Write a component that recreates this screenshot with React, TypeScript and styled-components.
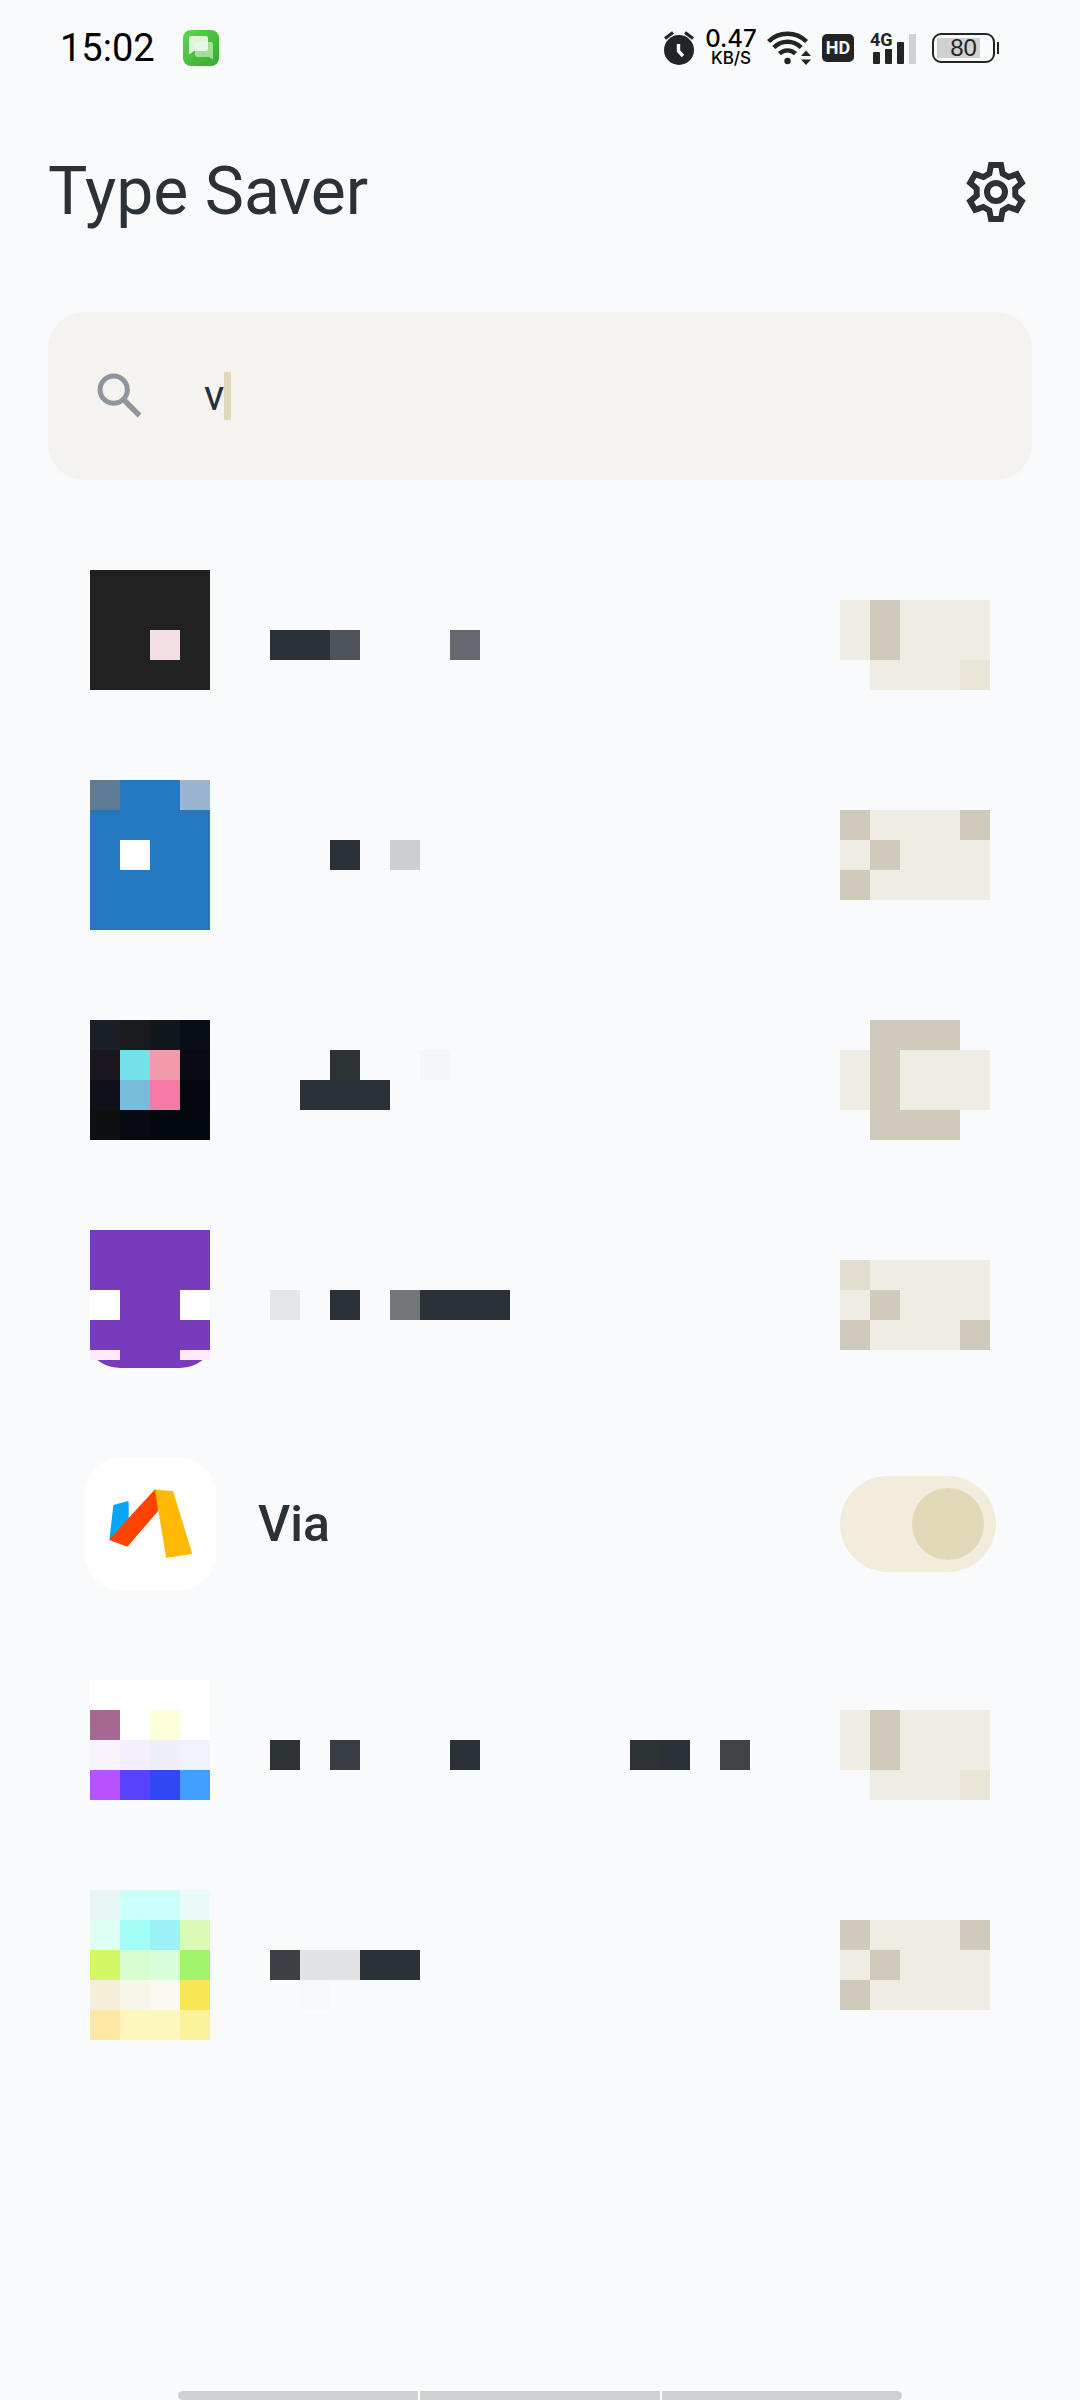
import React, { useState } from "react";
import styled, { createGlobalStyle } from "styled-components";

const GlobalStyle = createGlobalStyle`
  * { box-sizing: border-box; }
  body {
    margin: 0;
    background: #f8fafb;
    color: #2b3237;
    font-family: Roboto, "Noto Sans", sans-serif;
  }
`;

const Page = styled.div`
  min-height: 100vh;
  display: flex;
  flex-direction: column;
  background: #f8fafb;
`;

/* Status bar */

const StatusBar = styled.div`
  height: 96px;
  padding: 0 81px 0 60px;
  display: flex;
  align-items: center;
  justify-content: space-between;
  color: #000;
`;

const StatusGroup = styled.div<{ $gap: number }>`
  display: flex;
  align-items: center;
  gap: ${(p) => p.$gap}px;
`;

const Clock = styled.time`
  font-size: 38px;
  line-height: 44px;
  font-weight: 400;
`;

const NetSpeed = styled.div`
  width: 50px;
  display: flex;
  flex-direction: column;
  align-items: center;
  font-family: Inter, Roboto, sans-serif;
  font-weight: 500;
`;

const SpeedValue = styled.span`
  font-size: 24px;
  line-height: 20px;
`;

const SpeedUnit = styled.span`
  font-size: 17px;
  line-height: 18px;
`;

const HdBadge = styled.span`
  width: 32px;
  height: 28px;
  border-radius: 5px;
  display: flex;
  align-items: center;
  justify-content: center;
  background: #232425;
  color: #f8fafb;
  font: 700 18px/28px Roboto, sans-serif;
`;

const Signal = styled.div`
  position: relative;
  width: 46px;
  height: 34px;
  padding-bottom: 1px;
  display: flex;
  align-items: flex-end;
  justify-content: flex-end;
  gap: 5px;
`;

const SignalLabel = styled.span`
  position: absolute;
  left: 0;
  top: 0;
  color: #232425;
  font: 700 18px/18px Roboto, sans-serif;
`;

const SignalBar = styled.span<{ $height: number; $off?: boolean }>`
  width: 7px;
  height: ${(p) => p.$height}px;
  border-radius: 1px;
  background: ${(p) => (p.$off ? "#d0d1d3" : "#232425")};
`;

const Battery = styled.div`
  display: flex;
  align-items: center;
  gap: 2px;
`;

const BatteryShell = styled.div`
  width: 63px;
  height: 30px;
  border: 2px solid #232425;
  border-radius: 9px;
  display: flex;
  align-items: center;
  justify-content: center;
  background: linear-gradient(#d0d1d3, #d0d1d3) 3px center / 43px 20px no-repeat;
  color: #232425;
  font: 24px/26px "Liberation Sans", sans-serif;
`;

const BatteryTip = styled.span`
  width: 2px;
  height: 12px;
  background: #232425;
`;

/* Header and search */

const Header = styled.header`
  height: 192px;
  padding: 0 48px;
  display: flex;
  align-items: center;
  justify-content: space-between;
`;

const Title = styled.h1`
  margin: 0;
  font-size: 66px;
  line-height: 78px;
  font-weight: 400;
`;

const IconButton = styled.button`
  width: 72px;
  height: 72px;
  padding: 0;
  border: 0;
  display: flex;
  align-items: center;
  justify-content: center;
  background: none;
  color: #2b3237;
`;

const SearchBox = styled.label`
  height: 168px;
  margin: 24px 48px 0;
  padding: 0 48px;
  border-radius: 36px;
  display: flex;
  align-items: center;
  background: #f4f3ef;
`;

const SearchInput = styled.input`
  field-sizing: content;
  min-width: 4px;
  max-width: 100%;
  margin-left: 60px;
  padding: 0;
  border: 0;
  outline: 0;
  background: none;
  color: #2b3237;
  font: 42px/50px Roboto, "Noto Sans", sans-serif;
`;

const Caret = styled.span`
  width: 7px;
  height: 48px;
  background: #e1d9b9;
`;

/* Application list */

const List = styled.ul`
  flex: 1;
  margin: 90px 0 0;
  padding: 0 84px;
  display: flex;
  flex-direction: column;
  gap: 90px;
  list-style: none;
`;

const Row = styled.li`
  display: grid;
  grid-template-columns: 132px 1fr 156px;
  column-gap: 42px;
  align-items: start;
`;

const NamedRow = styled(Row)`
  align-items: center;
`;

const IconSlot = styled.div`
  display: flex;
  flex-direction: column;
  align-items: center;
`;

const NameSlot = styled.div`
  padding-left: 12px;
`;

const AppTile = styled.div`
  height: 132px;
  border-radius: 36px;
  overflow: hidden;
  background: #fff;
`;

const AppName = styled.label`
  font-size: 50px;
  line-height: 56px;
  font-weight: 500;
`;

const Switch = styled.input`
  appearance: none;
  width: 156px;
  height: 96px;
  margin: 0;
  padding: 12px;
  border-radius: 48px;
  display: flex;
  background: #f1ecdb;

  &::before {
    content: "";
    width: 72px;
    height: 72px;
    border-radius: 50%;
    background: #cfcaba;
  }
  &:checked {
    justify-content: flex-end;
  }
  &:checked::before {
    background: #e1d9b7;
  }
`;

const MosaicGrid = styled.div<{ $cols: number }>`
  display: grid;
  grid-template-columns: repeat(${(p) => p.$cols}, 30px);
  width: max-content;
`;

const MosaicCell = styled.span<{ $color: string; $short?: boolean }>`
  height: ${(p) => (p.$short ? 10 : 30)}px;
  background: ${(p) => p.$color};
`;

/* The bottom edge of a rounded app tile, showing below the blocks. */
const TileFoot = styled.div`
  width: 120px;
  height: 8px;
  display: flex;
  align-items: flex-end;
  justify-content: center;
  overflow: hidden;

  &::after {
    content: "";
    flex: none;
    width: 132px;
    height: 132px;
    border-radius: 36px;
    background: #783bbb;
  }
`;

/* Gesture bar */

const GestureBar = styled.div`
  width: 67%;
  height: 9px;
  margin: 0 auto;
  border-radius: 5px;
  overflow: hidden;
  display: flex;
  gap: 2px;
  background: #fff;
`;

const GestureSegment = styled.span`
  flex: 1;
  background: #d0d1d3;
`;

/* Each letter of a pattern is one blurred-out block; a dot is an empty one. */
type Palette = Record<string, string>;

const darkInk: Palette = {
  a: "#2b3237", b: "#4d5358", c: "#65696f", d: "#cdced0", e: "#f5f6f7", f: "#fafbfd",
  g: "#e4e7ea", h: "#747779", i: "#373d43", j: "#404346", k: "#3c4044", l: "#e0e2e3",
  m: "#f7f8fa", n: "#2d3234",
};

const sand: Palette = { a: "#efede3", b: "#cfcabb", c: "#e9e5d7", d: "#e2decf" };

function Mosaic({ rows, palette, shortLast }: { rows: string[]; palette: Palette; shortLast?: boolean }) {
  return (
    <MosaicGrid $cols={rows[0].length} aria-hidden="true">
      {rows.flatMap((row, y) =>
        [...row].map((key, x) => (
          <MosaicCell
            key={`${x}-${y}`}
            $color={palette[key] ?? "transparent"}
            $short={shortLast && y === rows.length - 1}
          />
        ))
      )}
    </MosaicGrid>
  );
}

interface HiddenApp {
  icon: string[];
  palette: Palette;
  name: string[];
  toggle: string[];
  rounded?: boolean;
}

const appsBefore: HiddenApp[] = [
  {
    icon: ["aaaa", "aaaa", "aaba", "aaaa"],
    palette: { a: "#212121", b: "#f3dfe3" },
    name: [".......", ".......", "aab...c"],
    toggle: [".....", "abaaa", "abaaa", ".aaac"],
  },
  {
    icon: ["baac", "aaaa", "adaa", "aaaa", "aaaa"],
    palette: { a: "#2478c0", b: "#5d7b94", c: "#9bb5d0", d: "#ffffff" },
    name: [".....", ".....", "..a.d"],
    toggle: [".....", "baaab", "abaaa", "baaaa"],
  },
  {
    icon: ["abcd", "eijf", "gklh", "mnoo"],
    palette: {
      a: "#1b1f27", b: "#181a1d", c: "#11171a", d: "#090e16", e: "#1b171f", f: "#090a12",
      g: "#101118", h: "#05070e", i: "#74e1e9", j: "#f39baa", k: "#76bddb", l: "#f57aa5",
      m: "#0d0f11", n: "#080a12", o: "#04080f",
    },
    name: [".......", "..n..e.", ".aaa..f"],
    toggle: [".bbb.", "abaaa", "abaaa", ".bbb."],
  },
  {
    icon: ["aaaa", "aaaa", "baab", "aaaa", "caac"],
    palette: { a: "#783bbb", b: "#ffffff", c: "#feeafc" },
    name: ["........", "........", "g.a.haaa"],
    toggle: [".....", "daaaa", "abaaa", "baaab"],
    rounded: true,
  },
];

const appsAfter: HiddenApp[] = [
  {
    icon: ["aaaa", "baca", "defg", "hijk"],
    palette: {
      a: "#ffffff", b: "#a66790", c: "#fdffdb", d: "#f9f4fc", e: "#f5effd", f: "#efeffc",
      g: "#f0f3fe", h: "#b852ff", i: "#5942fb", j: "#3149f4", k: "#429fff",
    },
    name: ["................", "................", "n.i...a.....na.j"],
    toggle: [".....", "abaaa", "abaaa", ".aaac"],
  },
  {
    icon: ["abbc", "defg", "hijk", "lmno", "pqqr"],
    palette: {
      a: "#e7f5f4", b: "#cbfffa", c: "#e9faf9", d: "#ddfff4", e: "#a2fdf5", f: "#9cf1f6",
      g: "#dbfab5", h: "#d3f763", i: "#d7fdce", j: "#d8fdd9", k: "#a1f36c", l: "#f7eed8",
      m: "#f8f6e8", n: "#f9f9f1", o: "#f6e753", p: "#ffe8a6", q: "#fdf6bd", r: "#fdf29c",
    },
    name: [".....", ".....", "kllaa", ".m..."],
    toggle: [".....", "baaab", "abaaa", "baaaa"],
  },
];

function HiddenRow({ app }: { app: HiddenApp }) {
  return (
    <Row>
      <IconSlot>
        <Mosaic rows={app.icon} palette={app.palette} shortLast={app.rounded} />
        {app.rounded && <TileFoot />}
      </IconSlot>
      <NameSlot>
        <Mosaic rows={app.name} palette={darkInk} />
      </NameSlot>
      <Mosaic rows={app.toggle} palette={sand} />
    </Row>
  );
}

function MessageIcon() {
  return (
    <svg width="36" height="36" viewBox="0 0 36 36" aria-hidden="true">
      <defs>
        <linearGradient id="msg" x1="0" y1="0" x2="1" y2="1">
          <stop offset="0" stopColor="#5bd84f" />
          <stop offset="1" stopColor="#37a92c" />
        </linearGradient>
      </defs>
      <rect width="36" height="36" rx="8" fill="url(#msg)" />
      <path d="M14 12h14a2 2 0 0 1 2 2v15.500l-4-2.500H15a3 3 0 0 1-3-3V14z" fill="#fff" opacity=".5" />
      <path d="M8 6h15a2 2 0 0 1 2 2v11a2 2 0 0 1-2 2H11l-5 3.500V8a2 2 0 0 1 2-2z" fill="#effbed" opacity=".9" />
    </svg>
  );
}

function AlarmIcon() {
  return (
    <svg width="32" height="36" viewBox="0 0 32 36" aria-hidden="true">
      <circle cx="16" cy="20" r="15" fill="#232425" />
      <path d="M2 8.500 10 2.500M30 8.500 22 2.500" stroke="#232425" strokeWidth="3.200" />
      <path d="M15.500 14v7l4.500 5" fill="none" stroke="#f8fafb" strokeWidth="3.400" />
    </svg>
  );
}

function WifiIcon() {
  return (
    <svg width="44" height="34" viewBox="0 0 44 34" aria-hidden="true">
      <g fill="none" stroke="#232425" strokeWidth="4.400">
        <path d="M1.500 10.500a27 27 0 0 1 38 0" />
        <path d="M6.800 16.600a19 19 0 0 1 27.400 0" />
        <path d="M12.500 22.600a11.500 11.500 0 0 1 16 0" />
      </g>
      <circle cx="20.500" cy="30" r="3.200" fill="#232425" />
      <path d="m39 19.500 5 5.500H34zM39 34l-5-5.500h10z" fill="#232425" />
    </svg>
  );
}

/* One tooth and the valley after it, repeated six times around the hub. */
const gearTooth = [[-15, -81], [15, -81], [20, -55], [38, -45]];

const gearPoints = Array.from({ length: 6 }, (_, i) => {
  const cos = Math.cos((i * Math.PI) / 3);
  const sin = Math.sin((i * Math.PI) / 3);
  return gearTooth
    .map(([x, y]) => `${(x * cos - y * sin).toFixed(1)},${(x * sin + y * cos).toFixed(1)}`)
    .join(" ");
}).join(" ");

function GearIcon() {
  return (
    <svg width="60" height="60" viewBox="-90 -90 180 180" fill="none" stroke="currentColor" strokeWidth="18" aria-hidden="true">
      <polygon points={gearPoints} />
      <circle r="27" />
    </svg>
  );
}

function SearchIcon() {
  return (
    <svg width="48" height="48" viewBox="0 0 48 48" fill="none" stroke="#8f959d" aria-hidden="true">
      <circle cx="17.700" cy="17.700" r="13.600" strokeWidth="5" />
      <path d="M28 28l15.500 15.500" strokeWidth="5.400" />
    </svg>
  );
}

function ViaLogo() {
  return (
    <svg width="132" height="132" viewBox="72 84 396 396" strokeWidth="6" strokeLinejoin="round" aria-hidden="true">
      <path d="M163 227l40-10v48l-51 57z" fill="#04a5fa" stroke="#04a5fa" />
      <path d="M151 328 286 181l6 60-91 106z" fill="#ff4300" stroke="#ff4300" />
      <path d="M288 182l49 4 56 183-72 11z" fill="#ffba00" stroke="#ffba00" />
    </svg>
  );
}

export default function App() {
  const [query, setQuery] = useState("v");
  const [viaOn, setViaOn] = useState(true);

  return (
    <Page>
      <GlobalStyle />
      <StatusBar>
        <StatusGroup $gap={28}>
          <Clock>15:02</Clock>
          <MessageIcon />
        </StatusGroup>
        <StatusGroup $gap={11}>
          <AlarmIcon />
          <NetSpeed>
            <SpeedValue>0.47</SpeedValue>
            <SpeedUnit>KB/S</SpeedUnit>
          </NetSpeed>
          <WifiIcon />
          <StatusGroup $gap={16}>
            <HdBadge>HD</HdBadge>
            <Signal>
              <SignalLabel>4G</SignalLabel>
              <SignalBar $height={12} />
              <SignalBar $height={15} />
              <SignalBar $height={22} />
              <SignalBar $height={30} $off />
            </Signal>
            <Battery>
              <BatteryShell>80</BatteryShell>
              <BatteryTip />
            </Battery>
          </StatusGroup>
        </StatusGroup>
      </StatusBar>

      <Header>
        <Title>Type Saver</Title>
        <IconButton type="button" aria-label="Settings">
          <GearIcon />
        </IconButton>
      </Header>

      <SearchBox>
        <SearchIcon />
        <SearchInput
          type="text"
          aria-label="Search apps"
          value={query}
          onChange={(e) => setQuery(e.target.value)}
        />
        <Caret />
      </SearchBox>

      <List>
        {appsBefore.map((app, i) => (
          <HiddenRow key={i} app={app} />
        ))}
        <NamedRow>
          <AppTile>
            <ViaLogo />
          </AppTile>
          <AppName htmlFor="via-switch">Via</AppName>
          <Switch
            id="via-switch"
            type="checkbox"
            role="switch"
            checked={viaOn}
            onChange={(e) => setViaOn(e.target.checked)}
          />
        </NamedRow>
        {appsAfter.map((app, i) => (
          <HiddenRow key={i} app={app} />
        ))}
      </List>

      <GestureBar>
        <GestureSegment />
        <GestureSegment />
        <GestureSegment />
      </GestureBar>
    </Page>
  );
}
